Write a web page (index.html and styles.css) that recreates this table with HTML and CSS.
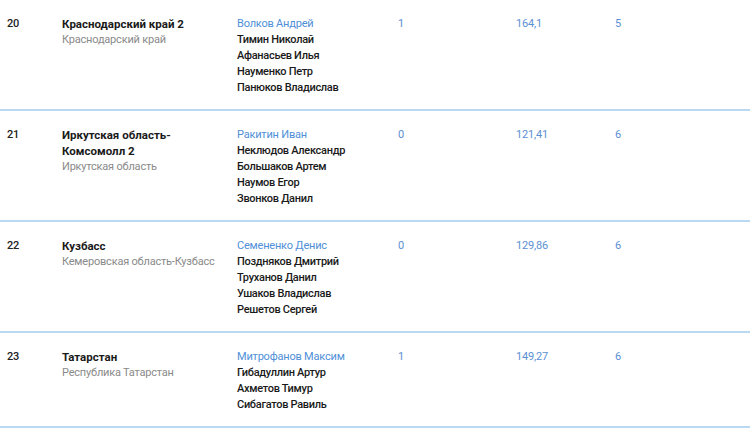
FILE: index.html
```html
<!DOCTYPE html>
<html lang="ru">
<head>
<meta charset="utf-8">
<link rel="stylesheet" href="styles.css">
</head>
<body>
<div class="table">
  <div class="row">
    <div class="num">20</div>
    <div class="team"><div class="team-name">Краснодарский край 2</div><div class="region">Краснодарский край</div></div>
    <div class="members"><div class="captain">Волков Андрей</div><div>Тимин Николай</div><div>Афанасьев Илья</div><div>Науменко Петр</div><div>Панюков Владислав</div></div>
    <div class="val">1</div>
    <div class="val">164,1</div>
    <div class="val">5</div>
  </div>
  <div class="row">
    <div class="num">21</div>
    <div class="team"><div class="team-name">Иркутская область-Комсомолл 2</div><div class="region">Иркутская область</div></div>
    <div class="members"><div class="captain">Ракитин Иван</div><div>Неклюдов Александр</div><div>Большаков Артем</div><div>Наумов Егор</div><div>Звонков Данил</div></div>
    <div class="val">0</div>
    <div class="val">121,41</div>
    <div class="val">6</div>
  </div>
  <div class="row">
    <div class="num">22</div>
    <div class="team"><div class="team-name">Кузбасс</div><div class="region">Кемеровская область-Кузбасс</div></div>
    <div class="members"><div class="captain">Семененко Денис</div><div>Поздняков Дмитрий</div><div>Труханов Данил</div><div>Ушаков Владислав</div><div>Решетов Сергей</div></div>
    <div class="val">0</div>
    <div class="val">129,86</div>
    <div class="val">6</div>
  </div>
  <div class="row">
    <div class="num">23</div>
    <div class="team"><div class="team-name">Татарстан</div><div class="region">Республика Татарстан</div></div>
    <div class="members"><div class="captain">Митрофанов Максим</div><div>Гибадуллин Артур</div><div>Ахметов Тимур</div><div>Сибагатов Равиль</div></div>
    <div class="val">1</div>
    <div class="val">149,27</div>
    <div class="val">6</div>
  </div>
</div>
</body>
</html>
```
FILE: styles.css
```css
html, body {
  margin: 0;
  padding: 0;
  background: #fff;
}
body {
  font-family: Roboto, "Liberation Sans", sans-serif;
  font-size: 11px;
  letter-spacing: -0.2px;
  line-height: 16px;
  color: #1e1e1e;
}
.table {
  width: 750px;
}
.row {
  display: grid;
  grid-template-columns: 55px 175px 161px 118px 99px 1fr;
  padding: 16px 0 13px 7px;
  border-bottom: 2px solid #b9d9f3;
}
.num {
  color: #222;
  font-weight: 500;
}
.team {
  padding-right: 12px;
}
.team-name {
  font-weight: bold;
  font-size: 11.5px;
  letter-spacing: 0;
  color: #1a1a1a;
}
.region {
  color: #8a8a8a;
}
.members {
  font-weight: 500;
  letter-spacing: -0.3px;
  color: #1a1a1a;
}
.captain {
  color: #4f8fd8;
  font-weight: 400;
  letter-spacing: -0.2px;
}
.val {
  color: #5b8fd3;
}
```
